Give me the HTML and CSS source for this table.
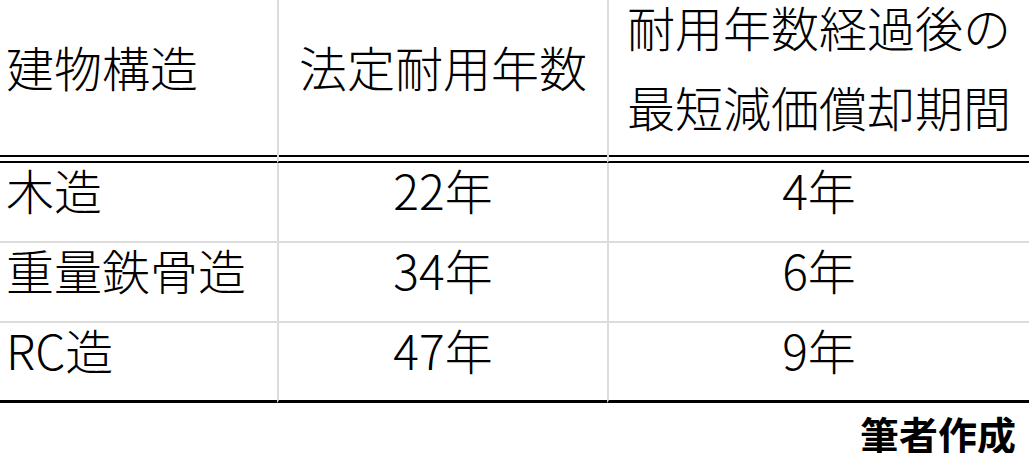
FILE: index.html
```html
<!DOCTYPE html>
<html lang="ja">
<head>
<meta charset="utf-8">
<title>耐用年数</title>
<link rel="stylesheet" href="styles.css">
</head>
<body>
<div class="page">
  <table class="life-table">
    <colgroup>
      <col class="c1">
      <col class="c2">
      <col class="c3">
    </colgroup>
    <thead>
      <tr>
        <th class="left">建物構造</th>
        <th>法定耐用年数</th>
        <th>耐用年数経過後の<br>最短減価償却期間</th>
      </tr>
    </thead>
    <tbody>
      <tr>
        <td class="left">木造</td>
        <td>22年</td>
        <td>4年</td>
      </tr>
      <tr>
        <td class="left">重量鉄骨造</td>
        <td>34年</td>
        <td>6年</td>
      </tr>
      <tr class="last">
        <td class="left">RC造</td>
        <td>47年</td>
        <td>9年</td>
      </tr>
    </tbody>
  </table>
  <div class="credit">筆者作成</div>
</div>
</body>
</html>
```
FILE: styles.css
```css
html, body {
  margin: 0;
  padding: 0;
  background: #fff;
}

body {
  font-family: "Noto Sans CJK JP", "Noto Sans", sans-serif;
  color: #000;
  overflow: hidden;
}

.page {
  width: 1029px;
}

.life-table {
  width: 1029px;
  table-layout: fixed;
  border-collapse: separate;
  border-spacing: 0;
  margin-top: -14px;
}

.c1 { width: 277px; }
.c2 { width: 330px; }
.c3 { width: 422px; }

.life-table th,
.life-table td {
  box-sizing: border-box;
  font-size: 48px;
  font-weight: 300;
  text-align: center;
  white-space: nowrap;
  padding: 0;
}

.life-table th + th,
.life-table td + td {
  border-left: 2px solid #dcdcdc;
}

.life-table th {
  height: 177px;
  line-height: 80px;
  vertical-align: middle;
  padding-bottom: 15px;
  border-bottom: 2px solid #000;
  box-shadow: inset 0 -4px 0 #fff, inset 0 -6px 0 #000;
}

.life-table td {
  height: 80px;
  line-height: 48px;
  vertical-align: top;
  padding-top: 2px;
  border-bottom: 2px solid #dcdcdc;
}

.life-table tr.last td {
  border-bottom: 3px solid #000;
  height: 80px;
}

.life-table .left {
  text-align: left;
  padding-left: 6px;
}

.credit {
  margin-top: 10px;
  padding-right: 13px;
  text-align: right;
  font-size: 39px;
  line-height: 40px;
  font-weight: 700;
}
```
